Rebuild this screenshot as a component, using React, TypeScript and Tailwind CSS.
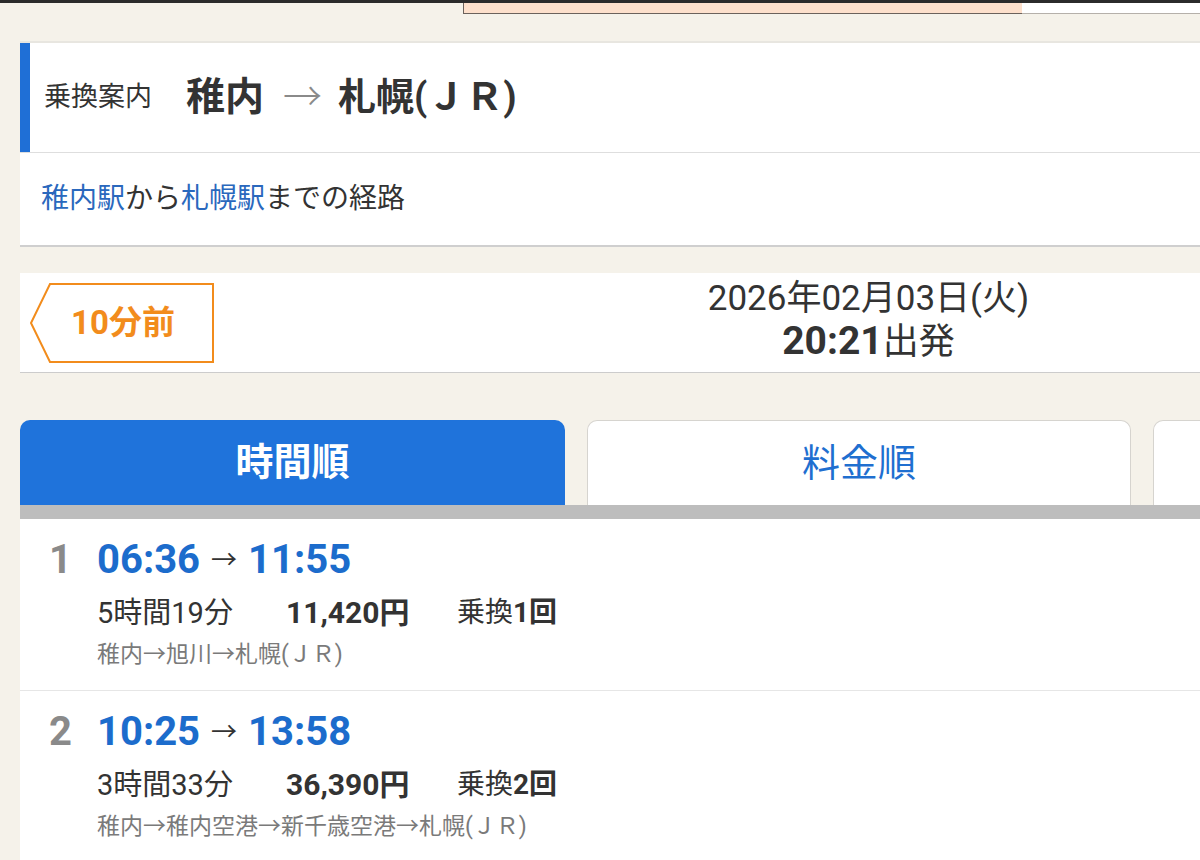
import React from "react";

type Route = {
  no: number;
  dep: string;
  arr: string;
  duration: string;
  fare: string;
  transfers: string;
  path: string;
};

const routes: Route[] = [
  {
    no: 1,
    dep: "06:36",
    arr: "11:55",
    duration: "5時間19分",
    fare: "11,420",
    transfers: "1",
    path: "稚内→旭川→札幌(ＪＲ)",
  },
  {
    no: 2,
    dep: "10:25",
    arr: "13:58",
    duration: "3時間33分",
    fare: "36,390",
    transfers: "2",
    path: "稚内→稚内空港→新千歳空港→札幌(ＪＲ)",
  },
];

const PrevButton = () => (
  <div className="relative w-[184px] h-[80px]">
    <svg width="184" height="80" viewBox="0 0 184 80" className="absolute inset-0">
      <polygon
        points="20,1 183,1 183,79 20,79 1,40"
        fill="white"
        stroke="#f28c1c"
        strokeWidth="2"
      />
    </svg>
    <div className="absolute inset-0 flex items-center justify-center pl-[2px] text-[33px] font-bold text-[#f28c1c]">
      10分前
    </div>
  </div>
);

const RouteRow = ({ route }: { route: Route }) => (
  <div className="flex pt-[19px] pb-[20px] border-b border-[#e6e6e6]">
    <div className="w-[77px] pl-[29px] leading-[44px] text-[40px] font-bold text-[#8a8a8a]">
      {route.no}
    </div>
    <div>
      <div className="flex items-center leading-[44px]">
        <span className="text-[40px] font-bold text-[#1c6ccc]">{route.dep}</span>
        <span className="mx-[11px] text-[26px] text-[#333]">→</span>
        <span className="text-[40px] font-bold text-[#1c6ccc]">{route.arr}</span>
      </div>
      <div className="flex items-center mt-[11px] leading-[40px] text-[29px] text-[#333]">
        <span className="w-[189px]">{route.duration}</span>
        <span className="w-[171px] text-[30px] font-bold">{route.fare}円</span>
        <span className="text-[28px]">
          乗換<span className="font-bold">{route.transfers}回</span>
        </span>
      </div>
      <div className="mt-[7px] leading-[30px] text-[23px] text-[#7a7a7a]">
        {route.path}
      </div>
    </div>
  </div>
);

const App = () => {
  return (
    <div className="w-[1200px] h-[860px] overflow-hidden bg-[#f5f2ea] text-[#333] font-[Roboto,'Noto_Sans_CJK_JP',sans-serif]">
      {/* browser strip */}
      <div className="h-[3px] bg-[#2b2b2b]" />
      <div className="flex h-[11px]">
        <div className="w-[463px]" />
        <div className="w-[559px] bg-[#fde0cc] border-l border-b border-[#6b625c]" />
        <div className="flex-1 bg-white border-b border-[#b5b0aa]" />
      </div>

      <div className="w-[1737px] px-[20px] pt-[27px]">
        {/* title card */}
        <div className="bg-white border-t-2 border-[#e8e6e0]">
          <div className="flex h-[110px] border-b border-[#dedede]">
            <div className="w-[10px] bg-[#1f6fd6]" />
            <div className="flex items-center pl-[14px]">
              <span className="text-[27px] text-[#333]">乗換案内</span>
              <span className="ml-[34px] text-[39px] font-bold text-[#333]">稚内</span>
              <span className="ml-[19px] mr-[16px] text-[39px] font-light text-[#8a8a8a]">→</span>
              <span className="text-[38px] font-bold text-[#333]">札幌(ＪＲ)</span>
            </div>
          </div>
          <div className="flex items-center h-[94px] pl-[21px] text-[28px] border-b-2 border-[#cfcfcf]">
            <span className="text-[#2a68bd]">稚内駅</span>
            <span>から</span>
            <span className="text-[#2a68bd]">札幌駅</span>
            <span>までの経路</span>
          </div>
        </div>

        {/* date */}
        <div className="mt-[26px] grid grid-cols-[1fr_auto_1fr] items-center h-[100px] bg-white border-b border-[#cccccc]">
          <div className="pl-[10px]">
            <PrevButton />
          </div>
          <div className="flex flex-col items-center pt-[2px]">
            <div className="text-[35px] leading-[42px] text-[#333]">2026年02月03日(火)</div>
            <div className="leading-[42px] text-[#333]">
              <span className="text-[39px] font-bold">20:21</span>
              <span className="text-[36px]">出発</span>
            </div>
          </div>
          <div />
        </div>

        {/* tabs */}
        <div className="mt-[47px] flex gap-[22px]">
          <div className="w-[545px] h-[85px] rounded-t-[10px] bg-[#1f73db] flex items-center justify-center text-[38px] font-bold text-white">
            時間順
          </div>
          <div className="w-[544px] h-[85px] rounded-t-[10px] bg-white border border-b-0 border-[#d6d4cf] flex items-center justify-center text-[38px] text-[#1f6fd0]">
            料金順
          </div>
          <div className="w-[544px] h-[85px] rounded-t-[10px] bg-white border border-b-0 border-[#d6d4cf]" />
        </div>
        <div className="h-[14px] bg-[#bdbdbd]" />

        {/* results */}
        <div className="bg-white">
          {routes.map((r) => (
            <RouteRow key={r.no} route={r} />
          ))}
        </div>
      </div>
    </div>
  );
};

export default App;
